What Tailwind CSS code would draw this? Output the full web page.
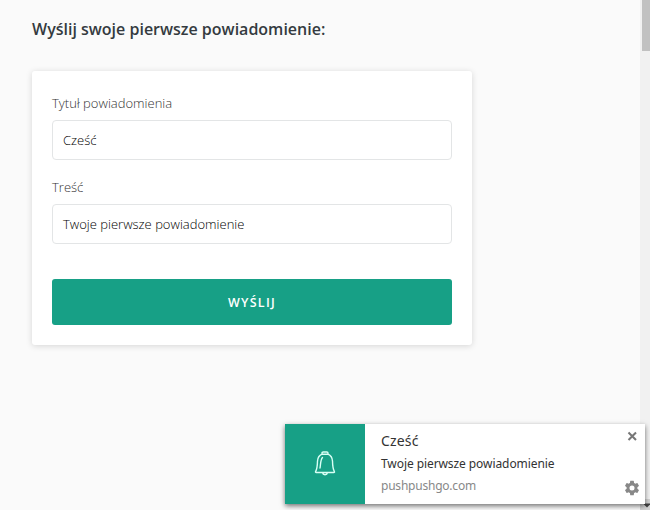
<!DOCTYPE html>
<html lang="pl">
<head>
<meta charset="utf-8">
<title>Powiadomienie</title>
<script src="https://cdn.jsdelivr.net/npm/@tailwindcss/browser@4"></script>
</head>
<body class="relative flex h-[510px] w-[650px] overflow-hidden bg-[#fafafa] font-['Open_Sans',sans-serif]">
<main class="flex-1 pl-8 pt-[17px]">
  <h1 class="h-6 whitespace-nowrap text-[16px] leading-6 font-semibold text-[#343a40]">Wyślij swoje pierwsze powiadomienie:</h1>
  <form class="mt-[30px] flex h-[274px] w-[440px] flex-col rounded-[3px] bg-white px-5 pt-[22px] shadow-[0_1px_6px_rgba(0,0,0,0.15)]">
    <label class="h-5 text-[13px] leading-5 font-light text-[#333]">Tytuł powiadomienia</label>
    <div class="mt-[7px] h-10 rounded-[4px] border border-[#e3e5e6] px-[10px] text-[13px] leading-[38px] font-light text-black">Cześć</div>
    <label class="mt-[17px] h-5 text-[13px] leading-5 font-light text-[#333]">Treść</label>
    <div class="mt-[7px] h-10 rounded-[4px] border border-[#e3e5e6] px-[10px] text-[13px] leading-[38px] font-light text-black">Twoje pierwsze powiadomienie</div>
    <button type="button" class="mt-[35px] h-[46px] rounded-[3px] bg-[#17a086] pt-[3px] text-[12.500px] font-semibold tracking-[1.300px] text-white">WYŚLIJ</button>
  </form>
</main>
<div class="flex w-[10px] flex-col bg-[#f1f1f1] pl-[2px]">
  <div class="h-[51px] bg-[#c1c1c1]"></div>
</div>
<svg class="absolute right-0 bottom-0" width="10" height="11" viewBox="0 0 10 11"><path fill="#d2d2d2" d="M0 0h10v11H0z"/><path fill="#404040" d="M3 4.500h8l-4 4z"/></svg>
<aside class="absolute left-[285px] top-[424px] flex h-20 w-[360px] bg-white font-['Noto_Sans',sans-serif] shadow-[0_2px_5px_rgba(0,0,0,0.55)]">
  <div class="flex w-20 items-center justify-center bg-[#17a086]">
    <svg width="24" height="28" viewBox="0 0 24 28" fill="none" stroke="#d9fff5" stroke-width="1.400" stroke-linejoin="round" stroke-linecap="round"><path d="M9 4.200V3Q9 2 10.200 2h3.600Q15 2 15 3v1.200M9 4.200h6q4.200 1.800 4.500 6.900c.1 5 .4 8 1.800 10.200.5.800.2 1.200-.6 1.200H3.300c-.8 0-1.100-.4-.6-1.200 1.400-2.200 1.700-5.200 1.800-10.200Q4.800 6 9 4.200zM9.500 22.700c.5 2.700 4.500 2.700 5 0M9.500 7.500C7.500 9.500 7.700 14 7 18"/></svg>
  </div>
  <div class="flex flex-1 flex-col pl-4 pt-[7px] whitespace-nowrap">
    <p class="h-5 text-[14px] leading-5 tracking-[0.150px] text-[#333]">Cześć</p>
    <p class="mt-[3px] h-5 text-[12px] leading-5 tracking-[-0.080px] text-[#333]">Twoje pierwsze powiadomienie</p>
    <p class="mt-[2px] h-5 text-[12px] leading-5 tracking-[-0.220px] text-[#888]">pushpushgo.com</p>
  </div>
  <div class="flex w-[21px] flex-col justify-between pt-[7px] pb-[8px]">
    <svg class="ml-[3px]" width="11" height="11" viewBox="0 0 11 11" stroke="#777" stroke-width="2.100"><path d="M1.500 1.500l7.500 7.500M9 1.500L1.500 9"/></svg>
    <svg width="16" height="16" viewBox="2 2 20 20" fill="#888"><path d="M19.430 12.980c.04-.32.070-.64.070-.98s-.03-.66-.07-.98l2.110-1.650c.19-.15.240-.42.120-.64l-2-3.460c-.12-.22-.39-.3-.61-.22l-2.490 1c-.52-.4-1.080-.73-1.690-.98l-.38-2.650A.488.488 0 0 0 14 2h-4c-.25 0-.46.180-.49.420l-.38 2.650c-.61.250-1.170.590-1.690.980l-2.490-1c-.23-.09-.49 0-.61.220l-2 3.460c-.13.220-.07.490.12.640l2.110 1.650c-.04.320-.07.650-.07.980s.03.660.07.980l-2.110 1.650c-.19.150-.24.420-.12.640l2 3.460c.12.220.39.300.61.220l2.490-1c.52.400 1.080.730 1.690.980l.38 2.650c.03.240.24.420.49.420h4c.25 0 .46-.18.490-.42l.38-2.650c.61-.25 1.170-.59 1.690-.98l2.490 1c.23.090.49 0 .61-.22l2-3.460c.12-.22.070-.49-.12-.64l-2.110-1.650zM12 15.500a3.500 3.500 0 1 1 0-7 3.500 3.500 0 0 1 0 7z" transform="translate(12 12) scale(.9) translate(-12 -12)"/></svg>
  </div>
</aside>
</body>
</html>
